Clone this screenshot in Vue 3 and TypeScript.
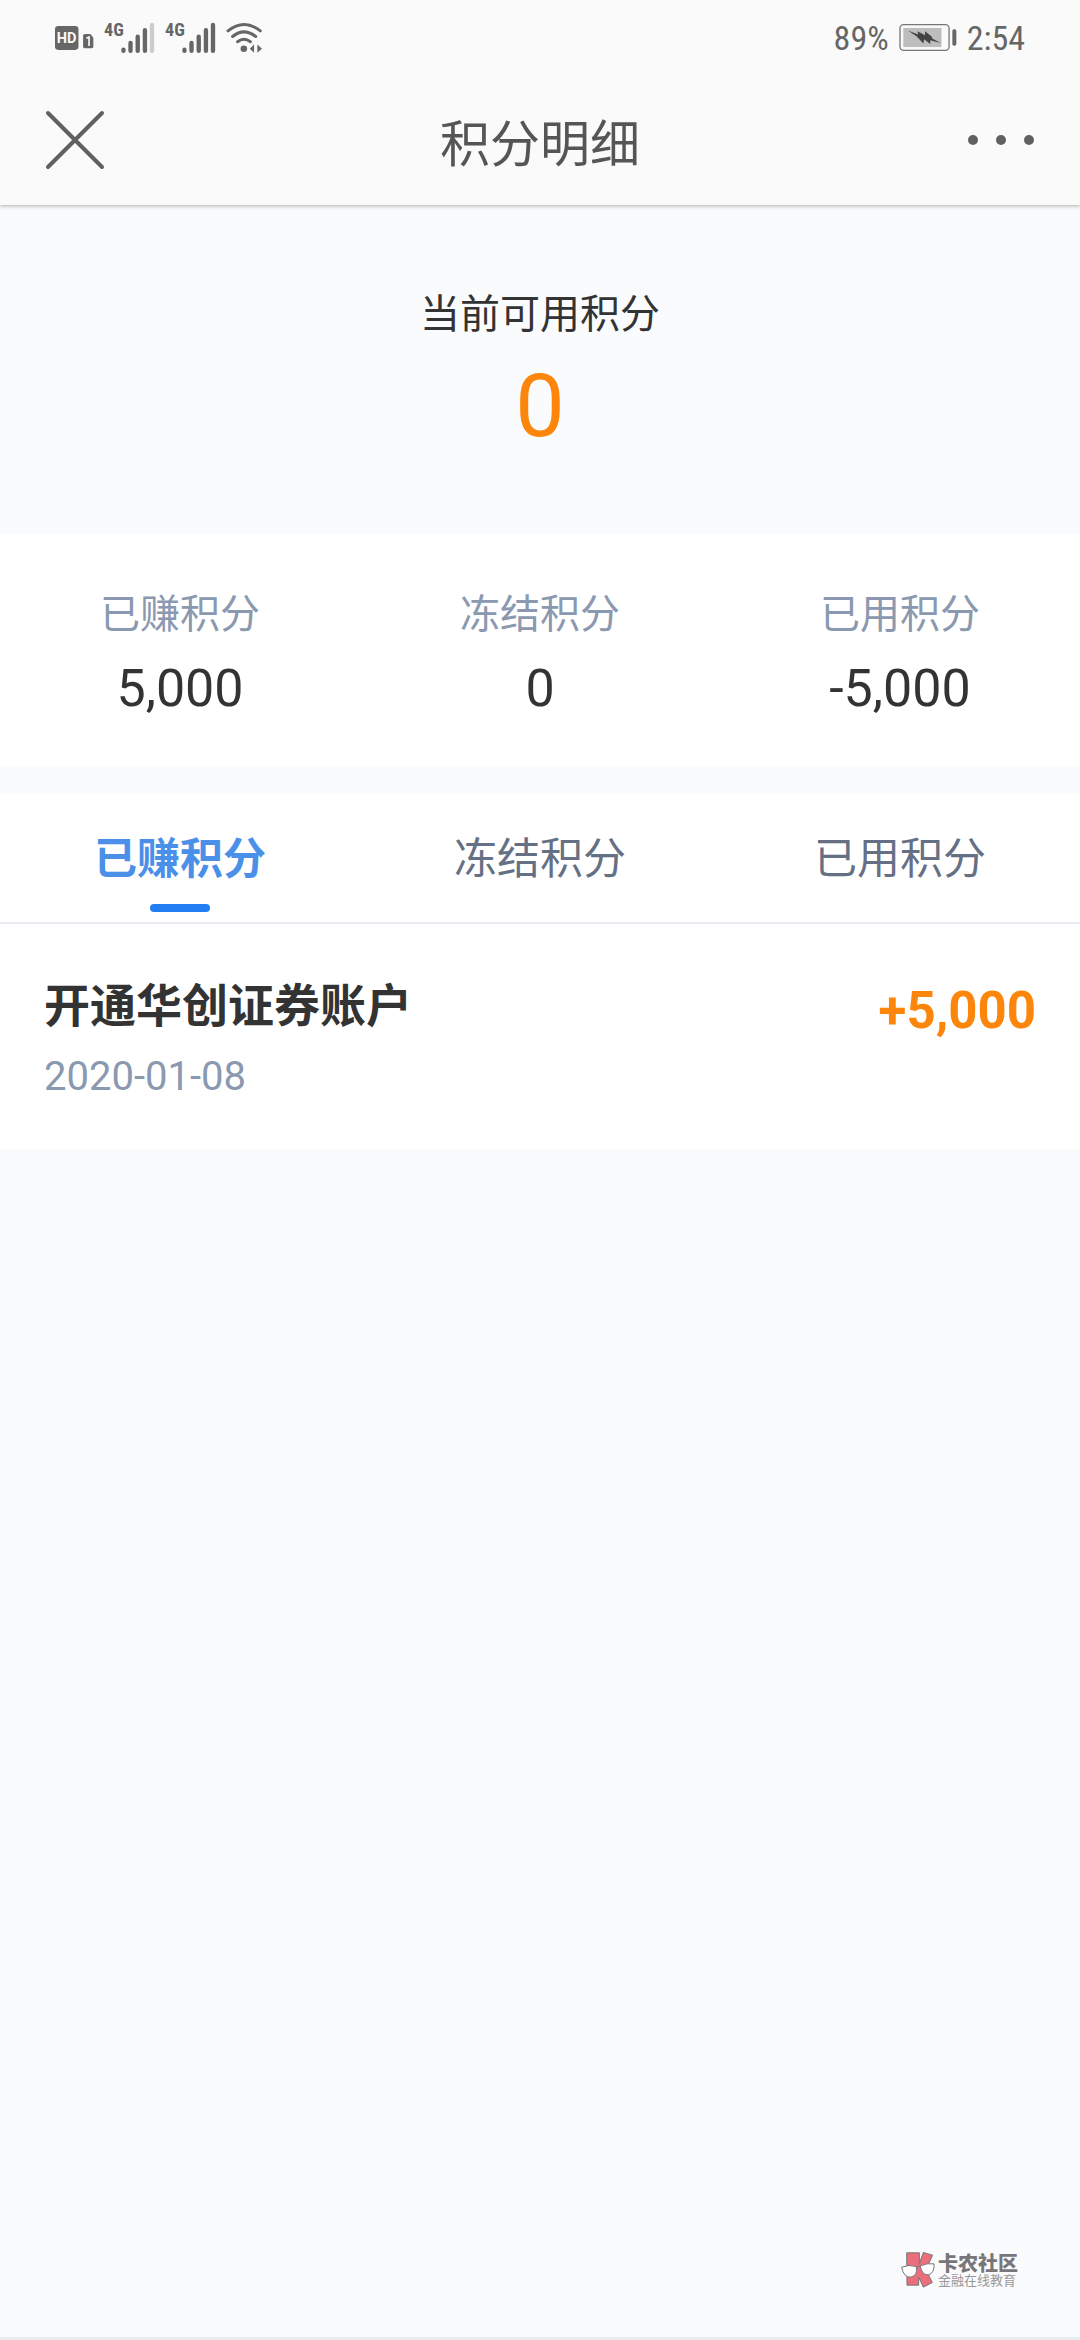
<script setup lang="ts">
import { computed, ref } from 'vue'

type Kind = 'earned' | 'frozen' | 'used'

interface PointRecord {
  kind: Kind
  title: string
  date: string
  amount: number
}

const available = 0

const groups: { kind: Kind; label: string; total: number }[] = [
  { kind: 'earned', label: '已赚积分', total: 5000 },
  { kind: 'frozen', label: '冻结积分', total: 0 },
  { kind: 'used', label: '已用积分', total: -5000 },
]

const records: PointRecord[] = [
  { kind: 'earned', title: '开通华创证券账户', date: '2020-01-08', amount: 5000 },
]

const active = ref<Kind>('earned')
const visible = computed(() => records.filter((r) => r.kind === active.value))

const format = (n: number) => n.toLocaleString('en-US')
const signed = (n: number) => (n > 0 ? '+' : '') + format(n)
</script>

<template>
  <div class="page">
    <header class="top">
      <div class="status">
        <div class="status-left">
          <svg class="hd" viewBox="0 0 118 72" aria-hidden="true">
            <rect x="0" y="0" width="71" height="72" rx="10" fill="#666" />
            <text x="35" y="52" text-anchor="middle" class="hd-text">HD</text>
            <path d="M90 24h17l9 11v27q0 5-5 5H90q-5 0-5-5V29q0-5 5-5z" fill="#666" />
            <path d="M95 37l8-4v27" fill="none" stroke="#fafafa" stroke-width="5" />
          </svg>
          <svg v-for="sim in 2" :key="sim" class="signal" viewBox="0 -24 152 142" aria-hidden="true">
            <text x="0" y="42" class="net-text">4G</text>
            <g stroke="#666" stroke-width="13" stroke-linecap="round">
              <path d="M58 82v3M79 62v23M100.500 43v42M122 24v61" />
              <path d="M143 8v77" :stroke="sim === 1 ? '#ccc' : '#666'" />
            </g>
          </svg>
          <svg class="wifi" viewBox="0 0 112 94" aria-hidden="true">
            <g fill="none" stroke="#666" stroke-width="9" stroke-linecap="round">
              <path d="M6 27Q54-12 104 27" />
              <path d="M20 44Q54 16 90 44" />
              <path d="M35 60Q54 45 74 60" />
            </g>
            <circle cx="54" cy="81" r="10" fill="#666" />
            <path d="M85 68v25L72 81zM95 68v25l14-12z" fill="#666" />
          </svg>
        </div>
        <div class="status-right">
          <span>89%</span>
          <svg class="battery" viewBox="0 0 174 82" aria-hidden="true">
            <rect x="2" y="2" width="149" height="78" rx="11" fill="none" stroke="#777" stroke-width="4" />
            <rect x="12" y="12" width="116" height="58" fill="#bdbdbd" />
            <path d="M26 20l31 12-2-10 23 12V22l20 16 2 6 25 14-31-9v12L75 46l-2 13-21-22z" fill="#444" />
            <rect x="161" y="16" width="12" height="50" rx="5" fill="#666" />
          </svg>
          <span>2:54</span>
        </div>
      </div>
      <div class="nav">
        <button class="icon-button" type="button" aria-label="关闭">
          <svg class="close" viewBox="0 0 60 60" aria-hidden="true">
            <path d="M3 3l54 54M57 3L3 57" stroke="#606060" stroke-width="4" stroke-linecap="round" />
          </svg>
        </button>
        <h1 class="title">积分明细</h1>
        <button class="icon-button" type="button" aria-label="更多">
          <svg class="more" viewBox="0 0 68 12" fill="#606060" aria-hidden="true">
            <circle cx="6" cy="6" r="5" />
            <circle cx="34" cy="6" r="5" />
            <circle cx="62" cy="6" r="5" />
          </svg>
        </button>
      </div>
    </header>

    <main>
      <section class="summary">
        <p class="summary-label">当前可用积分</p>
        <p class="summary-value">{{ format(available) }}</p>
      </section>

      <dl class="totals">
        <div v-for="g in groups" :key="g.kind" class="total">
          <dt>{{ g.label }}</dt>
          <dd>{{ format(g.total) }}</dd>
        </div>
      </dl>

      <div class="tabs" role="tablist">
        <button
          v-for="g in groups"
          :key="g.kind"
          class="tab"
          :class="{ active: g.kind === active }"
          type="button"
          role="tab"
          :aria-selected="g.kind === active"
          @click="active = g.kind"
        >
          {{ g.label }}
        </button>
      </div>

      <ul class="records">
        <li v-for="r in visible" :key="r.title + r.date" class="record">
          <div>
            <h2 class="record-title">{{ r.title }}</h2>
            <time class="record-date" :datetime="r.date">{{ r.date }}</time>
          </div>
          <span class="record-amount">{{ signed(r.amount) }}</span>
        </li>
      </ul>
    </main>

    <footer class="footer">
      <div class="brand">
        <svg class="brand-logo" viewBox="0 0 102 110" aria-hidden="true">
          <path
            d="M17 5h38v32L67 4l28 8-20 44 19 38-27 14-14-30v24H18z"
            fill="#ea6e7c"
            stroke="#77777a"
            stroke-width="3"
            stroke-linejoin="round"
          />
          <g fill="#fff" stroke="#77777a" stroke-width="3">
            <path d="M2 48q22-9 44-2 5 28-17 32Q8 79 2 48z" />
            <path d="M58 44q20-9 41-6 2 28-17 33-20 1-24-27z" />
            <path d="M46 48q6-5 12-3" fill="none" />
          </g>
        </svg>
        <div class="brand-text">
          <strong>卡农社区</strong>
          <small>金融在线教育</small>
        </div>
      </div>
    </footer>
  </div>
</template>

<style>
body {
  margin: 0;
  background: #fafbfd;
}
</style>

<style scoped>
.page {
  display: flex;
  flex-direction: column;
  min-height: 100vh;
  box-sizing: border-box;
  border-bottom: 3px solid #e8ecf1;
  background: #fafbfd;
  color: #333;
  font-family: Roboto, "Noto Sans CJK SC", sans-serif;
  font-size: 40px;
  line-height: 60px;
}

h1,
h2,
p,
dl,
dd,
ul {
  margin: 0;
  padding: 0;
}

button {
  padding: 0;
  border: 0;
  background: none;
  font-family: inherit;
  cursor: pointer;
}

svg {
  display: block;
  flex: none;
}

.top {
  position: relative;
  background: #fafafa;
  box-shadow: 0 1px 4px rgba(0, 0, 0, 0.3);
}

.status {
  display: flex;
  justify-content: space-between;
  align-items: center;
  height: 75px;
  padding: 0 55px;
  color: #666;
}

.status-left,
.status-right {
  display: flex;
  align-items: center;
  gap: 10px;
}

.status-right {
  font-family: "Roboto Condensed", "Liberation Sans Narrow", Roboto, sans-serif;
  font-size: 34px;
}

.hd {
  width: 39px;
  height: 24px;
}

.hd-text {
  fill: #fafafa;
  font: bold 44px Roboto, sans-serif;
}

.net-text {
  fill: #666;
  font: bold 54px "Roboto Condensed", "Liberation Sans Narrow", Roboto, sans-serif;
}

.signal {
  width: 51px;
  height: 48px;
}

.wifi {
  width: 37px;
  height: 31px;
}

.battery {
  width: 58px;
  height: 27px;
}

.nav {
  display: flex;
  justify-content: space-between;
  align-items: center;
  height: 130px;
  padding: 0 45px;
}

.icon-button {
  display: flex;
  align-items: center;
  width: 68px;
  height: 68px;
}

.close {
  width: 60px;
  height: 60px;
}

.more {
  width: 68px;
  height: 12px;
}

.title {
  color: #555;
  font-family: "Noto Sans CJK SC", sans-serif;
  font-size: 50px;
  font-weight: 400;
}

.summary {
  padding: 80px 0 77px;
  text-align: center;
}

.summary-value {
  margin-top: 9px;
  color: #fb860b;
  font-size: 88px;
  line-height: 104px;
}

.totals {
  display: flex;
  padding: 50px 0 41px;
  background: #fff;
  text-align: center;
}

.total {
  flex: 1;
}

.total dt {
  color: #8a98b0;
}

.total dd {
  margin-top: 8px;
  font-size: 52px;
  line-height: 72px;
}

.tabs {
  display: flex;
  margin-top: 28px;
  border-bottom: 2px solid #e9ebf1;
  background: #fff;
}

.tab {
  display: flex;
  flex: 1;
  flex-direction: column;
  align-items: center;
  gap: 15px;
  padding: 35px 0 10px;
  color: #667085;
  font-size: 43px;
  line-height: 60px;
}

.tab::after {
  width: 60px;
  height: 8px;
  border-radius: 4px;
  content: "";
}

.tab.active {
  color: #4a90e8;
  font-weight: 700;
}

.tab.active::after {
  background: #217ef2;
}

.records {
  background: #fff;
  list-style: none;
}

.record {
  display: flex;
  justify-content: space-between;
  align-items: flex-start;
  padding: 52px 44px 44px;
}

.record-title {
  font-size: 46px;
  font-weight: 700;
}

.record-date {
  display: block;
  margin-top: 13px;
  color: #8a98b0;
  line-height: 56px;
}

.record-amount {
  color: #fb860b;
  font-size: 51px;
  font-weight: 700;
  line-height: 70px;
}

.footer {
  display: flex;
  justify-content: flex-end;
  margin-top: auto;
  padding: 0 62px 49px;
}

.brand {
  display: flex;
  align-items: center;
  gap: 3px;
  color: #77777a;
}

.brand-logo {
  width: 34px;
  height: 37px;
}

.brand-text {
  padding-top: 4px;
}

.brand-text strong,
.brand-text small {
  display: block;
}

.brand-text strong {
  font-size: 20px;
  font-weight: 900;
  line-height: 20px;
}

.brand-text small {
  color: #98989b;
  font-size: 13px;
  line-height: 14px;
}
</style>
